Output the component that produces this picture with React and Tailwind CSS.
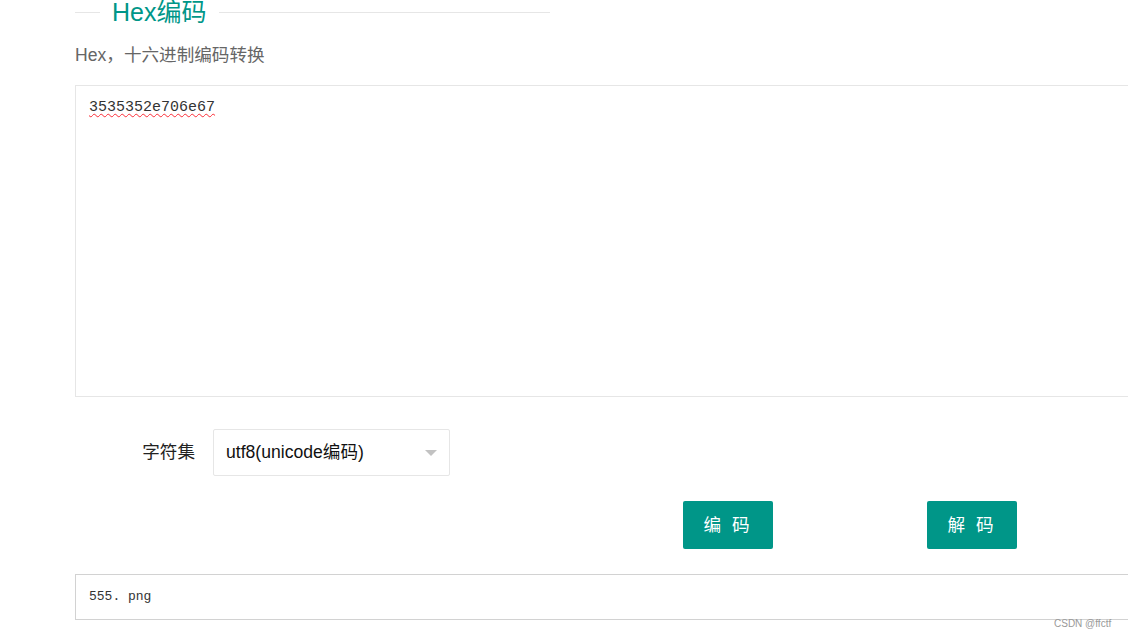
import React from 'react';

const sans = { fontFamily: '"Liberation Sans", "Noto Sans CJK SC", sans-serif' };
const mono = { fontFamily: '"Liberation Mono", monospace' };

const App = () => {
  return (
    <div className="relative w-[1128px] h-[638px] overflow-hidden bg-white" style={sans}>
      <div className="pl-[75px] w-[1200px]">
        {/* legend */}
        <div className="flex items-center w-[475px] h-[25px]">
          <div className="w-[25px] h-px bg-[#e6e6e6]" />
          <span className="ml-[12px] mr-[13px] text-[25px] leading-[25px] text-[#009688]">Hex编码</span>
          <div className="flex-1 h-px bg-[#e6e6e6]" />
        </div>

        <p className="mt-[17px] text-[17.6px] leading-[26px] text-[#666]">Hex，十六进制编码转换</p>

        {/* textarea */}
        <div className="mt-[17px] h-[312px] border border-[#e6e6e6] px-[13px] py-[8px]">
          <span
            className="text-[15px] leading-[22px] text-[#333] underline decoration-wavy decoration-red-500 decoration-1 underline-offset-2"
            style={mono}
          >
            3535352e706e67
          </span>
        </div>

        {/* charset */}
        <div className="mt-[32px] flex items-center">
          <label className="w-[120px] text-right text-[17.6px] text-[#222]">字符集</label>
          <div className="ml-[18px] w-[237px] h-[47px] border border-[#e6e6e6] rounded-[2px] flex items-center justify-between px-[12px]">
            <span className="text-[17.6px] text-[#111]">utf8(unicode编码)</span>
            <div className="w-0 h-0 border-l-[6px] border-r-[6px] border-t-[6px] border-l-transparent border-r-transparent border-t-[#c2c2c2]" />
          </div>
        </div>

        {/* buttons */}
        <div className="mt-[25px] flex">
          <button className="ml-[608px] w-[90px] h-[48px] rounded-[2px] bg-[#009688] text-white text-[17.6px] tracking-[3px]">
            编 码
          </button>
          <button className="ml-[154px] w-[90px] h-[48px] rounded-[2px] bg-[#009688] text-white text-[17.6px] tracking-[3px]">
            解 码
          </button>
        </div>

        {/* output */}
        <div className="mt-[25px] h-[46px] border border-[#d2d2d2] flex items-center px-[13px]">
          <span className="text-[13px] text-[#333]" style={mono}>
            555. png
          </span>
        </div>
      </div>

      <span className="absolute left-[1054px] top-[618px] text-[10px] leading-[12px] text-[#999]">CSDN @ffctf</span>
    </div>
  );
};

export default App;
